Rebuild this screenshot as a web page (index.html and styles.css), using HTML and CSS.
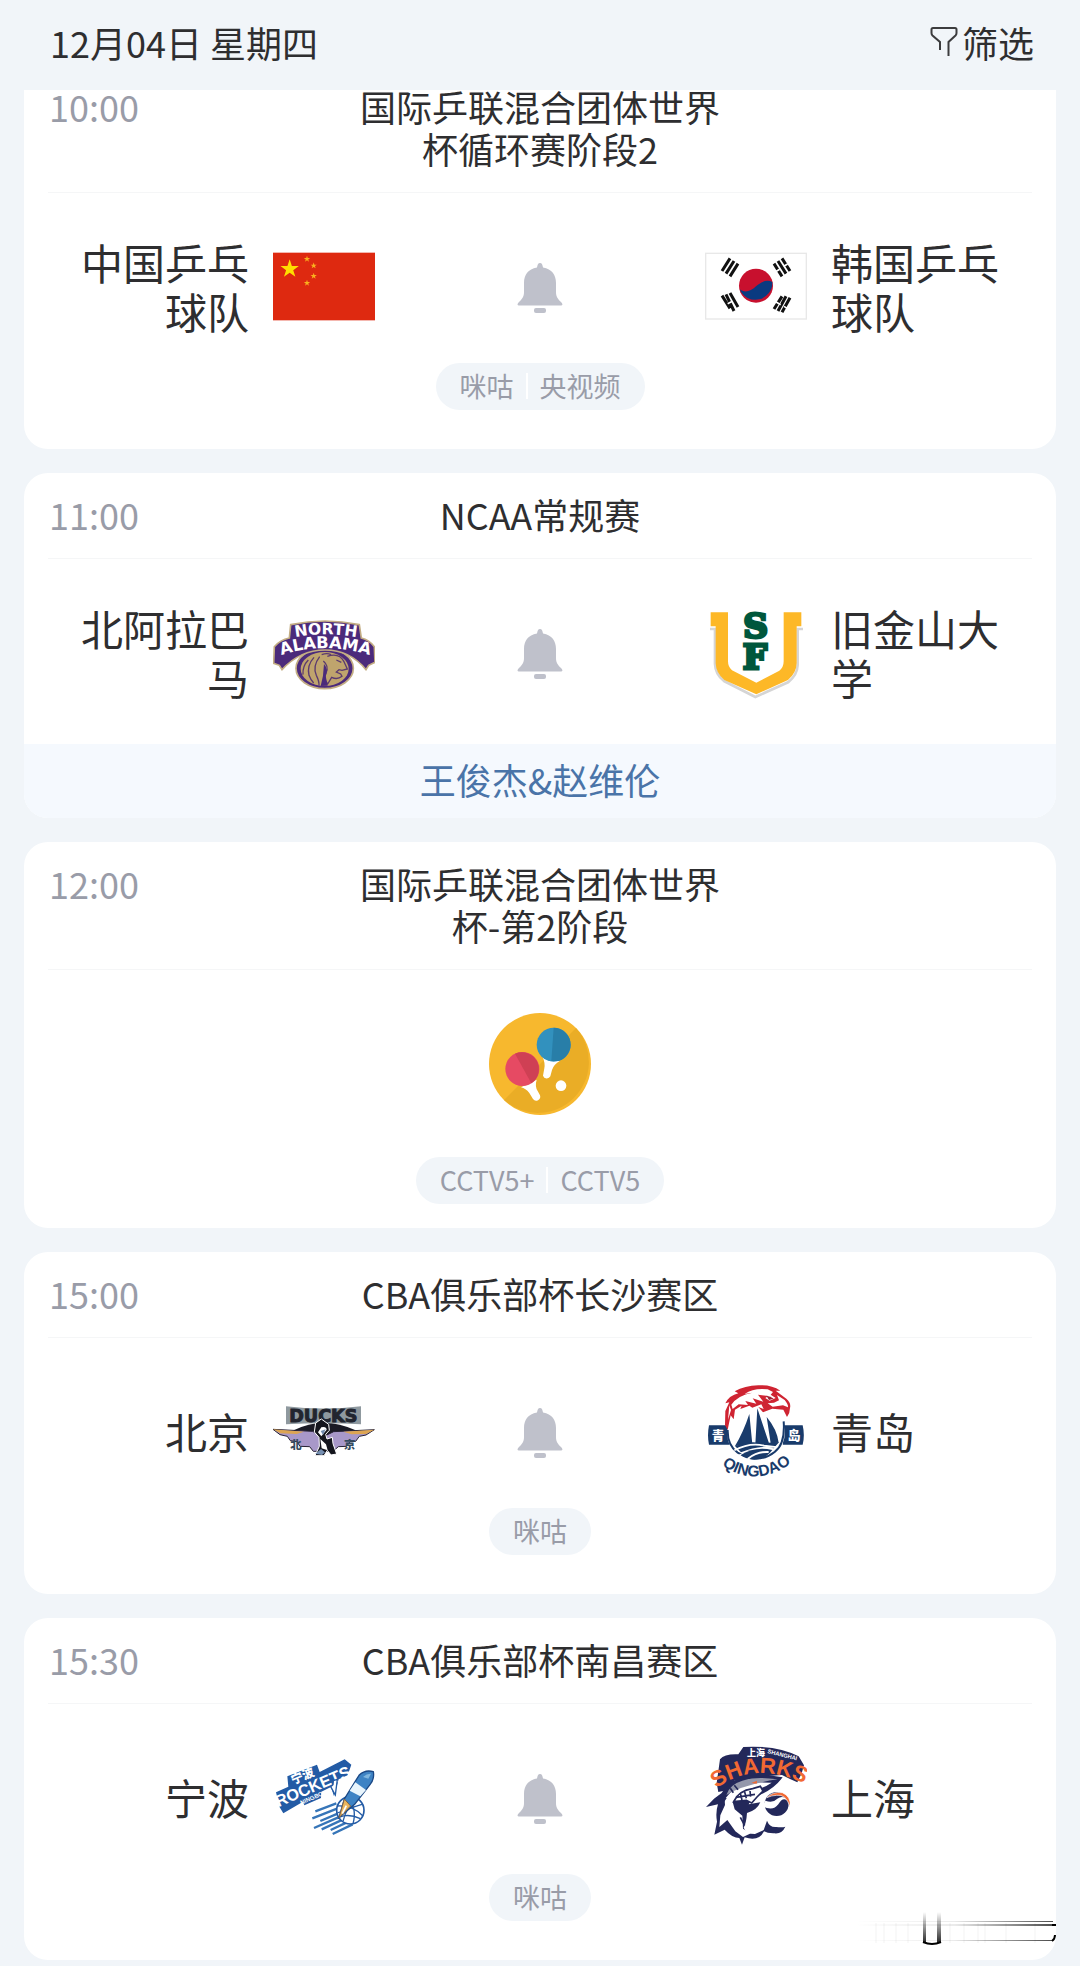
FILE: index.html
```
<!DOCTYPE html>
<html lang="zh-CN">

<head>
    <meta charset="UTF-8">
    <meta name="viewport" content="width=device-width, initial-scale=1.0">
    <title>赛程</title>
    <link rel="stylesheet" href="styles.css">
</head>

<body>
    <svg class="symbols" aria-hidden="true">
        <symbol id="bell" viewBox="0 0 46 50">
            <path d="M23 0c2 0 2.500 2 3 4.500C35 6 39 12 39 20v9c0 5 2 7 5 10 2 2 2 3.500-.5 3.500h-41c-2.500 0-2.500-1.500-.5-3.500C5 36 7 34 7 29v-9C7 12 11 6 20 4.500 20.500 2 21 0 23 0z"/>
            <rect x="17" y="45" width="12" height="5" rx="2"/>
        </symbol>
        <symbol id="star" viewBox="-10 -10 20 20">
            <path d="M0-10 2.300-3.100H9.500L3.700 1.200 5.900 8.100 0 3.800-5.900 8.100-3.700 1.200-9.500-3.100H-2.300z"/>
        </symbol>
    </svg>

    <header class="topbar">
        <h1>12月04日 星期四</h1>
        <button class="filter" type="button">
            <svg viewBox="0 0 28 32" width="28" height="32" aria-hidden="true">
                <path d="M10 24V16L2.500 9.500Q1.500 8.500 1.500 7V3.500Q1.500 2 3 2H25Q26.500 2 26.500 3.500V7Q26.500 8.500 25.500 9.500L18.500 16V30"/>
            </svg>筛选
        </button>
    </header>

    <main class="list">
        <section class="card">
            <div class="card-head">
                <time>10:00</time>
                <h2>国际乒联混合团体世界杯循环赛阶段2</h2>
            </div>
            <div class="match">
                <span class="team home">中国乒乓球队</span>
                <svg class="logo" viewBox="39 -15 306 306" role="img" aria-label="中国">
                    <rect x="39" y="38" width="306" height="203" fill="#de2910"/>
                    <use href="#star" x="60" y="58" width="58" height="58" fill="#ffde00"/>
                    <g fill="#f9b01e">
                        <use href="#star" x="131" y="47" width="20" height="20"/>
                        <use href="#star" x="151" y="67" width="20" height="20"/>
                        <use href="#star" x="151" y="98" width="20" height="20"/>
                        <use href="#star" x="131" y="119" width="20" height="20"/>
                    </g>
                </svg>
                <button class="bell" type="button" aria-label="提醒"><svg><use href="#bell"/></svg></button>
                <svg class="logo" viewBox="45 -15 306 306" role="img" aria-label="韩国">
                    <rect x="47" y="40" width="302" height="197" fill="#fff" stroke="#e8e8e8" stroke-width="4"/>
                    <circle cx="198" cy="137" r="51" fill="#c8102e"/>
                    <path d="M149 148C165 160 182 154 198 139S232 118 247 126A51 51 0 0 1 149 148z" fill="#0a3a80"/>
                    <g stroke="#111" stroke-width="9">
                        <path d="M96 93l24-38M108 101l24-38M120 109l24-38"/>
                        <path d="M252 71l24 38M264 63l24 38M276 55l24 38"/>
                        <path d="M96 167l24 38M108 163l24 50M120 159l24 42"/>
                        <path d="M252 207l24-38M264 213l24-44M276 217l24-44"/>
                    </g>
                    <g stroke="#fff" stroke-width="5">
                        <path d="M259 94l10-6M281 79l12-7M113 191l14-7M257 185l15 9M282 199l14 9"/>
                    </g>
                </svg>
                <span class="team">韩国乒乓球队</span>
            </div>
            <div class="channels"><span>咪咕</span><span>央视频</span></div>
        </section>

        <section class="card">
            <div class="card-head">
                <time>11:00</time>
                <h2>NCAA常规赛</h2>
            </div>
            <div class="match">
                <span class="team home">北阿拉巴马</span>
                <svg class="logo" viewBox="39 3 306 306" role="img" aria-label="North Alabama">
                    <ellipse cx="194" cy="205" rx="86" ry="61" fill="#4b2a7b" stroke="#c3ad83" stroke-width="5"/>
                    <path d="M92 74Q195 52 298 74L304 114Q328 120 343 140L345 187 326 196 318 209Q270 150 195 150T66 209L58 196 41 190 43 140Q60 120 88 114z" fill="#4b2a7b" stroke="#c3ad83" stroke-width="5"/>
                    <ellipse cx="194" cy="207" rx="72" ry="51" fill="#bfa46d"/>
                    <path d="M202 169Q238 157 252 185L262 207 246 211 237 209 229 216 242 222 246 229Q232 240 215 232L203 252Q190 238 198 218 208 199 190 183M179 170Q157 199 169 226 178 244 177 257M162 172Q140 196 147 226 152 240 161 249M145 180Q127 198 129 224M185 164Q201 158 213 164M229 180l15 7" fill="none" stroke="#5b3a70" stroke-width="4"/>
                    <path d="M192 192Q206 208 197 228L203 257 182 258Q191 228 192 192z" fill="#4b2a7b"/>
                    <path id="arc-north" d="M92 114Q196 92 304 114" fill="none"/>
                    <path id="arc-alabama" d="M50 170Q192 119 343 170" fill="none"/>
                    <text class="mark" font-size="47" fill="#fff"><textPath href="#arc-north" startOffset="50%">NORTH</textPath></text>
                    <text class="mark" font-size="49" fill="#fff"><textPath href="#arc-alabama" startOffset="50%">ALABAMA</textPath></text>
                </svg>
                <button class="bell" type="button" aria-label="提醒"><svg><use href="#bell"/></svg></button>
                <svg class="logo" viewBox="45 18 306 306" role="img" aria-label="旧金山大学">
                    <path d="M60 102H75V207Q76 238 102 258L196 306 294 262Q322 240 323 210V102H339" fill="none" stroke="#d5d5d5" stroke-width="8"/>
                    <path d="M62 52H114V199Q114 216 126 226L199 263 268 227Q281 217 281 199V52H334V94H320V205Q319 235 294 255L199 298 103 255Q78 235 77 205V94H62z" fill="#fdb827"/>
                    <g class="slab-mark" font-size="103" fill="#00573c" stroke="#00573c" stroke-width="9">
                        <text x="197" y="129">S</text>
                        <text x="195" y="221">F</text>
                    </g>
                </svg>
                <span class="team">旧金山大学</span>
            </div>
            <a class="note" href="#">王俊杰&amp;赵维伦</a>
        </section>

        <section class="card single">
            <div class="card-head">
                <time>12:00</time>
                <h2>国际乒联混合团体世界杯-第2阶段</h2>
            </div>
            <div class="match">
                <svg class="logo" viewBox="57 36 306 306" role="img" aria-label="乒乓球">
                    <circle cx="210" cy="189" r="153" fill="#f7b82e"/>
                    <path d="M318 81A153 153 0 0 1 102 297z" fill="#eaad26"/>
                    <path d="M218 168L270 179Q251 190 246 207L241 226A12 12 0 0 1 219 224L223 202Q226 186 218 168z" fill="#fff"/>
                    <circle cx="251" cy="131" r="51" fill="#3291be"/>
                    <path d="M251 80A51 51 0 0 1 268 179L244 180z" fill="#287ea8"/>
                    <path d="M153 259L200 236Q194 256 203 270L210 283A12 12 0 0 1 189 294L178 276Q167 262 153 259z" fill="#fff"/>
                    <circle cx="157" cy="204" r="51" fill="#e64a63"/>
                    <path d="M135 158A51 51 0 0 1 184 247z" fill="#cf4054"/>
                    <circle cx="273" cy="254" r="16" fill="#fff"/>
                </svg>
            </div>
            <div class="channels"><span>CCTV5+</span><span>CCTV5</span></div>
        </section>

        <section class="card">
            <div class="card-head">
                <time>15:00</time>
                <h2>CBA俱乐部杯长沙赛区</h2>
            </div>
            <div class="match">
                <span class="team home">北京</span>
                <svg class="logo" viewBox="39 -30 306 306" role="img" aria-label="北京">
                    <path d="M101 121Q190 75 287 121L258 144 190 153 124 144z" fill="#1b1b25"/>
                    <path d="M39 118L157 124 192 139 221 125 343 119 318 135 298 139 287 154 270 155 260 169 235 170 219 184H160L149 170 120 169 111 155 91 152 82 139 60 134z" fill="#a898c9" stroke="#262234" stroke-width="3"/>
                    <path d="M39 118L132 125 110 132 61 130zM343 119L250 125 275 133 318 132z" fill="#dda552"/>
                    <path d="M78 49Q190 62 303 49V103Q190 96 78 103z" fill="#8f999f"/>
                    <text class="mark" x="190" y="97" font-size="53" fill="#22252f" stroke="#22252f" stroke-width="3">DUCKS</text>
                    <path d="M184 87L206 103 208 121 197 133 201 147 217 142 219 161 230 192 213 195 202 181 192 197H165L178 169 177 142 163 126 167 99z" fill="#14151d" stroke="#fff" stroke-width="3"/>
                    <path d="M184 112Q199 108 200 119L184 139 174 127zM181 147L198 163 203 181 185 175z" fill="#fff"/>
                    <path d="M182 123l15-5-8 17zM166 191l17-14 12 10-9 8z" fill="#758fb1"/>
                    <g class="cjk-mark" font-size="34" fill="#344b60">
                        <text x="108" y="178">北</text>
                        <text x="269" y="178">京</text>
                    </g>
                </svg>
                <button class="bell" type="button" aria-label="提醒"><svg><use href="#bell"/></svg></button>
                <svg class="logo" viewBox="45 15 306 306" role="img" aria-label="青岛">
                    <path d="M57 151H120V209H57Q51 181 57 151zM278 151H338Q345 181 338 209H278z" fill="#193b6b"/>
                    <path d="M113 154Q105 215 146 244 202 271 253 239 286 214 285 164L274 124 229 108 127 112z" fill="#fff"/>
                    <path d="M113 165Q112 211 143 233Q205 270 255 230 286 207 281 139" fill="none" stroke="#193b6b" stroke-width="6"/>
                    <path d="M178 117L187 208 135 213Q160 172 178 117zM202 100L237 205 196 208zM230 126Q261 163 266 203L242 205z" fill="#193b6b"/>
                    <path d="M135 213Q183 196 207 204L267 202 251 220Q204 209 153 232z" fill="#193b6b"/>
                    <path d="M133 226Q180 201 222 212L260 216Q212 212 145 242" fill="none" stroke="#fff" stroke-width="5"/>
                    <path d="M152 240Q197 212 247 225 224 255 192 254 169 253 152 240z" fill="#193b6b"/>
                    <path d="M173 252Q201 229 236 231" fill="none" stroke="#fff" stroke-width="6"/>
                    <path d="M113 164L105 151 106 108 118 82 106 85Q118 61 145 55L134 49Q164 32 205 31 244 28 271 47L257 47 289 71Q304 84 300 99 300 114 291 126L280 104 247 101 219 112 205 96 221 102 214 88 187 98 178 92 151 102 155 92 135 104 131 133 122 121z" fill="#cf2432"/>
                    <path d="M124 89Q143 61 187 53L164 57Q191 38 233 43L249 51 242 59 257 69 239 77 226 69 235 63 204 59 220 80 188 70 199 86 166 78 174 90 146 88 128 102zM261 60L284 75Q295 88 294 97L279 91 248 95 233 85 252 83 267 76zM118 91L123 105 114 134z" fill="#fff"/>
                    <path d="M229 62q13 2 22 9l-14 4z" fill="#9e2235"/>
                    <g class="cjk-mark" font-size="38" fill="#fff">
                        <text x="84" y="194">青</text>
                        <text x="312" y="194">岛</text>
                    </g>
                    <path id="arc-qingdao" d="M84 262Q195 350 315 256" fill="none"/>
                    <text class="narrow-mark" font-size="47" fill="#193b6b"><textPath href="#arc-qingdao" startOffset="50%">QINGDAO</textPath></text>
                </svg>
                <span class="team">青岛</span>
            </div>
            <div class="channels"><span>咪咕</span></div>
        </section>

        <section class="card">
            <div class="card-head">
                <time>15:30</time>
                <h2>CBA俱乐部杯南昌赛区</h2>
            </div>
            <div class="match">
                <span class="team home">宁波</span>
                <svg class="logo" viewBox="39 6 306 306" role="img" aria-label="宁波">
                    <g fill="none" stroke="#3675b8" stroke-width="7">
                        <path d="M166 202L229 178M157 223L231 194M181 231L233 209M162 252L240 218M185 256L248 227M212 258L259 236M218 270L278 241"/>
                    </g>
                    <path d="M48 145L85 128 82 97 171 62 179 84 254 46 274 62 263 94 236 106 222 157 213 129 184 143 183 162 133 184 129 173 70 208 59 190z" fill="#235ba5"/>
                    <g transform="rotate(-23 151 151)">
                        <text class="cjk-mark" x="151" y="104" font-size="36" fill="#fff">宁波</text>
                        <text class="narrow-mark" x="167" y="149" font-size="49" fill="#fff">ROCKETS</text>
                        <text class="narrow-mark" x="150" y="169" font-size="18" fill="#fff">NINGBO</text>
                    </g>
                    <path d="M232 106L226 153 212 128 219 122 220 110z" fill="#fff" stroke="#235ba5" stroke-width="4"/>
                    <circle cx="271" cy="199" r="41" fill="#fff" stroke="#235ba5" stroke-width="5"/>
                    <path d="M232 186Q277 183 308 215M232 207Q274 190 306 181M259 159Q293 189 279 239M288 163Q260 188 249 232M238 219Q268 208 301 224" fill="none" stroke="#235ba5" stroke-width="4"/>
                    <path d="M237 221L253 165 297 94Q315 76 340 83 344 105 330 122L284 181z" fill="#3e83c4" stroke="#1b4885" stroke-width="4"/>
                    <path d="M286 115L318 138 301 157 269 140z" fill="#e9f5fc"/>
                    <path d="M309 99q12-11 24-10l-8 15z" fill="#80b6df"/>
                    <path d="M253 165L272 186 237 221z" fill="#eab55d" stroke="#7d634b" stroke-width="3"/>
                    <path d="M259 185l-12 24" stroke="#fff" stroke-width="5"/>
                </svg>
                <button class="bell" type="button" aria-label="提醒"><svg><use href="#bell"/></svg></button>
                <svg class="logo" viewBox="45 36 306 306" role="img" aria-label="上海">
                    <path d="M90 76Q104 59 145 61L160 39Q260 33 326 67L342 94 335 118 322 145 300 135 276 123 211 128 133 140 124 166 85 174 80 147z" fill="#23285a"/>
                    <path id="arc-sharks" d="M84 160Q190 82 338 146" fill="none"/>
                    <text class="narrow-mark" font-size="66" fill="#f26932"><textPath href="#arc-sharks" startOffset="50%">SHARKS</textPath></text>
                    <text class="cjk-mark" x="198" y="66" font-size="27" fill="#fff">上海</text>
                    <text class="narrow-mark" x="276" y="68" font-size="17" fill="#fff" transform="rotate(14 276 68)">SHANGHAI</text>
                    <path d="M278 130Q226 120 173 126 116 137 95 177L72 194 48 219 84 211Q76 235 81 263L73 302 104 287Q127 312 148 312L156 332 164 310Q209 325 224 287L195 300Q169 300 161 281 169 267 171 237 201 229 211 205L176 211 188 190Q245 174 278 130z" fill="#23285a"/>
                    <path d="M186 170Q163 168 150 178L128 204 134 226 157 245 159 284 183 298 159 309 136 292 112 258 88 279 91 244 105 213 104 196Q128 162 165 149L205 145 245 146Q220 163 186 170z" fill="#fff"/>
                    <path d="M263 136Q196 126 157 140 119 151 109 183 158 152 263 136z" fill="#9498ab"/>
                    <path d="M131 203Q146 170 188 164L211 157 219 171 201 189 185 207 169 199z" fill="#fff" stroke="#23285a" stroke-width="5"/>
                    <path d="M138 190L195 181M151 178l5 20M164 174l5 19M180 171l2 17M133 154l11 13M121 163l9 13M91 215l17-24M151 250l13 24" fill="none" stroke="#23285a" stroke-width="5"/>
                    <path d="M184 147l17-7-1 9z" fill="#f26932"/>
                    <circle cx="260" cy="210" r="36" fill="#23285a"/>
                    <path d="M226 200Q249 208 262 194 281 180 296 203 279 185 265 211 249 233 218 217z" fill="#fff"/>
                    <path d="M230 191Q248 172 277 176 304 187 300 218 287 179 260 184 246 184 230 191z" fill="#f26932" stroke="#fff" stroke-width="2"/>
                    <path d="M220 291L231 260Q239 281 259 279 277 281 286 278 276 300 254 298 234 299 220 291z" fill="#23285a"/>
                </svg>
                <span class="team">上海</span>
            </div>
            <div class="channels"><span>咪咕</span></div>
            <svg class="smear" viewBox="0 0 200 36" width="200" height="36" aria-hidden="true">
                <defs>
                    <linearGradient id="fade-x">
                        <stop offset="0" stop-opacity="0"/>
                        <stop offset=".5" stop-opacity=".08"/>
                        <stop offset="1" stop-opacity=".7"/>
                    </linearGradient>
                    <linearGradient id="fade-y" x2="0" y2="1">
                        <stop offset="0" stop-opacity="0"/>
                        <stop offset="1" stop-opacity=".85"/>
                    </linearGradient>
                </defs>
                <g fill="url(#fade-x)">
                    <rect y="10" width="197" height="1"/>
                    <rect y="13" width="198" height="2"/>
                    <rect y="29" width="196" height="1"/>
                </g>
                <g fill="url(#fade-y)">
                    <rect x="67" y="1" width="3" height="31"/>
                    <rect x="81" y="1" width="4" height="31"/>
                </g>
                <path d="M20 12v20M28 12v20M40 12v20M52 12v20M94 12v20M108 12v20M122 12v20M129 12v20M150 12v20M179 12v20" stroke="#000" stroke-opacity=".05"/>
                <path d="M67 31q9 4 18 0M196 14h4M199 24q0 4-3 6" fill="none" stroke="#000" stroke-width="2"/>
            </svg>
        </section>
    </main>
</body>

</html>
```
FILE: styles.css
```
* {
    box-sizing: border-box;
}

body {
    margin: 0;
    background-color: #f1f5f9;
    color: #2e2e30;
    font-family: "Noto Sans CJK SC", "Noto Sans", sans-serif;
    font-size: 36px;
    line-height: 42px;
}

h1, h2 {
    margin: 0;
    font-size: 36px;
    font-weight: 400;
}

button {
    border: none;
    padding: 0;
    background: none;
    color: inherit;
    font: inherit;
    cursor: pointer;
}

.symbols {
    display: none;
}

.topbar {
    display: flex;
    justify-content: space-between;
    align-items: center;
    height: 90px;
    padding: 0 46px 6px 50px;
}

.filter {
    display: flex;
    align-items: center;
    gap: 4px;
}

.filter path {
    fill: none;
    stroke: #3c3c3e;
    stroke-width: 2;
}

/* the list is scrolled, so the first card is cut off by the top bar */
.list {
    display: flex;
    flex-direction: column;
    gap: 24px;
    padding: 0 24px 6px;
    overflow: hidden;
}

.card {
    position: relative;
    border-radius: 24px;
    background-color: #fff;
    overflow: hidden;
}

.card:first-child {
    margin-top: -25px;
}

.card-head {
    display: grid;
    grid-template-columns: 1fr 370px 1fr;
    margin: 0 24px;
    padding: 20px 0 23px;
    border-bottom: 1px solid #f5f6f7;
    text-align: center;
}

.card-head time {
    padding-left: 1px;
    color: #999ca8;
    text-align: left;
}

.match {
    display: grid;
    grid-template-columns: 1fr 102px 282px 102px 1fr;
    column-gap: 24px;
    align-items: center;
    justify-items: center;
    height: 185px;
    padding: 0 50px;
}

.team {
    justify-self: start;
    font-size: 42px;
    line-height: 49px;
}

.home {
    justify-self: end;
    text-align: right;
}

.logo {
    width: 102px;
    height: 102px;
}

.bell {
    padding-top: 4px;
}

.bell svg {
    display: block;
    width: 46px;
    height: 50px;
    fill: #bfc1cb;
}

.channels {
    display: flex;
    width: fit-content;
    margin: -15px auto 39px;
    padding: 0 12px 1px;
    border-radius: 24px;
    background-color: #f1f5f9;
    color: #999ca8;
    font-size: 27px;
    line-height: 46px;
}

.channels span {
    padding: 0 12px;
}

.channels span + span {
    padding-left: 14px;
    background: linear-gradient(#fff, #fff) left center / 2px 26px no-repeat;
}

.note {
    display: block;
    padding-bottom: 4px;
    background-color: #f5f9fe;
    color: #4a74a8;
    line-height: 70px;
    text-align: center;
    text-decoration: none;
}

.single .match {
    display: flex;
    justify-content: center;
    height: 187px;
}

.single .channels {
    margin: 0 auto 24px;
}

/* lettering inside the club logos */
.mark {
    font-family: "DejaVu Sans", sans-serif;
    font-weight: 700;
    text-anchor: middle;
}

.slab-mark {
    font-family: "DejaVu Serif", serif;
    font-weight: 700;
    text-anchor: middle;
}

.narrow-mark {
    font-family: "Liberation Sans", Arial, sans-serif;
    font-weight: 700;
    text-anchor: middle;
}

.cjk-mark {
    font-family: "Noto Sans CJK SC", sans-serif;
    font-weight: 900;
    text-anchor: middle;
}

.smear {
    position: absolute;
    right: 0;
    bottom: 13px;
}
```
